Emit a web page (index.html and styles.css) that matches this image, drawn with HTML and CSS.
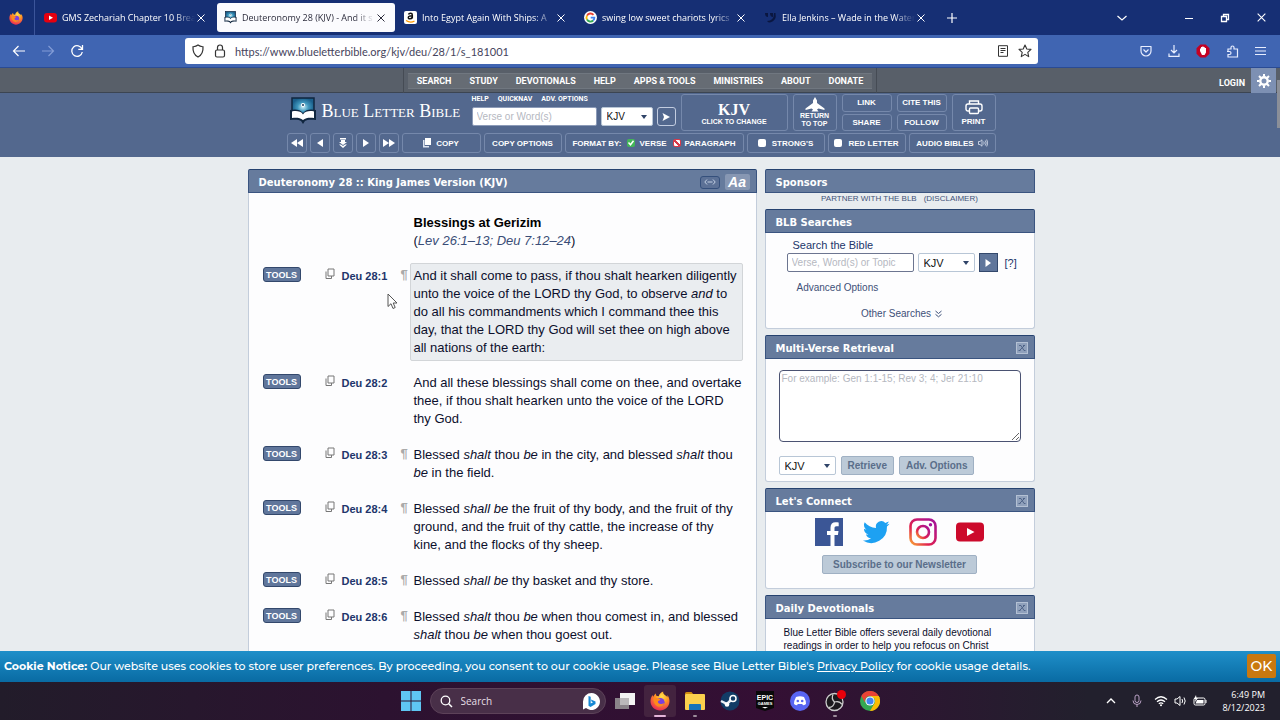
FILE: index.html
```html
<!DOCTYPE html>
<html lang="en">
<head>
    <meta charset="UTF-8">
    <title>Deuteronomy 28 (KJV)</title>
    <link rel="stylesheet" href="styles.css">
</head>
<body>
    <svg class="defs" width="0" height="0">
        <defs>
            <radialGradient id="fox" cx=".6" cy=".25" r=".8"><stop offset="0" stop-color="#ffe14a"/><stop offset=".45" stop-color="#ff9322"/><stop offset="1" stop-color="#e8215c"/></radialGradient>
            <linearGradient id="insta" x1="0" y1="1" x2="1" y2="0"><stop offset="0" stop-color="#f9a634"/><stop offset=".35" stop-color="#e0204f"/><stop offset="1" stop-color="#a3129c"/></linearGradient>
            <radialGradient id="sky"><stop offset="0" stop-color="#c9eff8"/><stop offset=".5" stop-color="#3f97bd"/><stop offset="1" stop-color="#1b5f8b"/></radialGradient>
            <symbol id="firefox" viewBox="0 0 20 20">
                <path fill="url(#fox)" d="M13.2.5c-.3 1.7.5 2.500 1.600 3.500 1 .5 2.200 1.300 2.500 2.200.3-.6.2-1.500 0-2.300C19 6 19.600 8.300 19.500 10.500 19.200 15.800 15 19.500 10 19.500S.6 15.600.5 10.500c0-2.600.8-4.700 2.300-6.400 0 .7.1 1.300.5 1.700C4 4.200 4.900 3.200 5.900 2.500c-.1 1.200.2 2.200 1.100 2.500l1.800.2C9 3.300 11 1.300 13.200.5z"/>
                <circle cx="10.300" cy="11.200" r="4.300" fill="#7a3fe0"/>
                <path fill="#ff8a1c" d="M3.500 7.500c1.500-.9 3.300-.8 4.600.1l2.300.6c0 1-1.700 1.300-2.400 2.100-.4 1.600 1.200 3 3 2.800 1.400-.2 2.300-1 3.200-.6-.8 2.300-3 3.500-5.200 3.200-3.400-.5-5.700-4-5.500-8.200z"/>
            </symbol>
            <symbol id="blb" viewBox="0 0 28 28">
                <rect x="3" y="1" width="22" height="18" fill="url(#sky)" stroke="#10263f" stroke-width="1.500"/>
                <circle cx="14" cy="8" r="2" fill="#fff"/><circle cx="14" cy="8" r="1" fill="#143a5c"/>
                <path d="M1 23V13c5-1 10-1 13 3 3-4 8-4 13-3v10c-5-.6-9-.5-11 1l-2 3-2-3c-2-1.500-6-1.600-11-1z" fill="#10263f"/>
                <path d="M3 21v-6.500c4-1 9-.5 11 3 2-3.500 7-4 11-3V21c-4-.6-8-.5-11 2-3-2.500-7-2.600-11-2z" fill="#fff"/>
            </symbol>
            <symbol id="x" viewBox="0 0 10 10"><path d="M1.500 1.500l7 7M8.500 1.500l-7 7" fill="none" stroke="currentColor"/></symbol>
            <symbol id="shut" viewBox="0 0 8 8"><path d="M1 1.500h2l3 5h1.500M6.500 1.500L1.500 6.500M5 1.500h2M.5 6.500h2" fill="none" stroke="currentColor"/></symbol>
            <symbol id="copy" viewBox="0 0 10 12"><path d="M3 1h6v7H3z" fill="none" stroke="currentColor"/><path d="M1 3.500v7h5.500V8" fill="none" stroke="currentColor"/></symbol>
        </defs>
    </svg>

    <div class="tabs">
        <div class="home"><svg width="14" height="14"><use href="#firefox"/></svg></div>
        <div class="tab">
            <svg width="13" height="13" viewBox="0 0 13 13"><rect y="2" width="13" height="9.500" rx="3" fill="#e5000f"/><path d="M5 4.500v4.500l4-2.250z" fill="#fff"/></svg>
            <span>GMS Zechariah Chapter 10 Brea</span>
            <button aria-label="Close"><svg width="10" height="10"><use href="#x"/></svg></button>
        </div>
        <div class="tab on">
            <svg width="13" height="13"><use href="#blb"/></svg>
            <span>Deuteronomy 28 (KJV) - And it s</span>
            <button aria-label="Close"><svg width="10" height="10"><use href="#x"/></svg></button>
        </div>
        <div class="tab">
            <svg width="13" height="13" viewBox="0 0 13 13"><rect width="13" height="13" rx="2" fill="#fff"/><path d="M4.500 3.500C5 2 8.300 1.800 8.300 3.900v3.600M8.200 4.800c-2-.1-3.900.3-3.900 1.800 0 1.700 3 1.700 3.900-.2" fill="none" stroke="#111" stroke-width="1.500"/><path d="M2 9.500q4.500 3 8.500.4" fill="none" stroke="#f90" stroke-width="1.200"/></svg>
            <span>Into Egypt Again With Ships: A</span>
            <button aria-label="Close"><svg width="10" height="10"><use href="#x"/></svg></button>
        </div>
        <div class="tab">
            <svg width="13" height="13" viewBox="0 0 13 13"><circle cx="6.500" cy="6.500" r="6.500" fill="#fff"/><g fill="none" stroke-width="1.800"><path d="M9.500 3.800A4 4 0 0 0 3 4.600" stroke="#ea4335"/><path d="M3 4.600a4 4 0 0 0 0 3.900" stroke="#fbbc05"/><path d="M3 8.500a4 4 0 0 0 6.200 1" stroke="#34a853"/><path d="M9.200 9.500a4 4 0 0 0 1.200-2.900H6.700" stroke="#4285f4"/></g></svg>
            <span>swing low sweet chariots lyrics</span>
            <button aria-label="Close"><svg width="10" height="10"><use href="#x"/></svg></button>
        </div>
        <div class="tab">
            <svg width="13" height="13" viewBox="0 0 13 13"><path d="M1 2h3v4q-3 0-3-4zM6 2h3v4q-3 0-3-4z" fill="#0a1640"/><path d="M11.500 2q1.500 8-5.500 9.500-2 0-3-1.500 7 0 7-8z" fill="#0a1640"/></svg>
            <span>Ella Jenkins – Wade in the Water</span>
            <button aria-label="Close"><svg width="10" height="10"><use href="#x"/></svg></button>
        </div>
        <button class="plus" aria-label="New tab"><svg width="12" height="12" viewBox="0 0 12 12"><path d="M6 1v10M1 6h10" stroke="#fff" stroke-width="1.200"/></svg></button>
        <div class="window">
            <button aria-label="List all tabs"><svg width="12" height="12" viewBox="0 0 12 12"><path d="M1.500 4l4.500 4 4.500-4" fill="none" stroke="#fff" stroke-width="1.200"/></svg></button>
            <button aria-label="Minimize"><svg width="10" height="10" viewBox="0 0 10 10"><path d="M1 5.500h8" stroke="#fff"/></svg></button>
            <button aria-label="Restore"><svg width="10" height="10" viewBox="0 0 10 10"><path d="M1.500 3.500h5v5h-5zM3.500 3V1.500h5v5H7" fill="none" stroke="#fff" stroke-width="1.300"/></svg></button>
            <button aria-label="Close window"><svg width="11" height="11"><use href="#x"/></svg></button>
        </div>
    </div>

    <div class="toolbar">
        <div class="tools-left">
            <button aria-label="Back"><svg width="14" height="14" viewBox="0 0 14 14"><path d="M13 7H1.500M6.500 2l-5 5 5 5" fill="none" stroke="#fff" stroke-width="1.200"/></svg></button>
            <button aria-label="Forward"><svg width="14" height="14" viewBox="0 0 14 14"><path d="M1 7h11.500M7.500 2l5 5-5 5" fill="none" stroke="#829cd6" stroke-width="1.200"/></svg></button>
            <button aria-label="Reload"><svg width="14" height="14" viewBox="0 0 14 14"><path d="M12 5A5.300 5.300 0 1 0 12.300 8M12.500 1v4.300H8.300" fill="none" stroke="#fff" stroke-width="1.300"/></svg></button>
        </div>
        <div class="url">
            <svg width="14" height="14" viewBox="0 0 14 14"><path d="M7 1c2 1.500 3.500 1.600 5 1.800C12.300 7 11 11 7 13 3 11 1.700 7 2 2.800 3.500 2.600 5 2.500 7 1z" fill="none" stroke="#333" stroke-width="1.200"/></svg>
            <svg width="12" height="14" viewBox="0 0 12 14"><rect x="1.500" y="6" width="9" height="7" rx="1.500" fill="none" stroke="#333" stroke-width="1.200"/><path d="M3.500 6V3.500a2.500 2.500 0 0 1 5 0V6" fill="none" stroke="#333" stroke-width="1.200"/></svg>
            <input type="text" aria-label="Address" value="https://www.blueletterbible.org/kjv/deu/28/1/s_181001">
            <svg width="12" height="12" viewBox="0 0 12 12"><path d="M1.500.7h9v10.600h-9zM3.500 3.500h5M3.500 5.500h5M3.500 7.500h3" fill="none" stroke="#333"/></svg>
            <svg width="14" height="14" viewBox="0 0 14 14"><path d="M7 1l1.800 4 4.200.4-3.200 2.900.9 4.300L7 10.400l-3.700 2.200.9-4.300L1 5.400 5.200 5z" fill="none" stroke="#333" stroke-width="1.100" stroke-linejoin="round"/></svg>
        </div>
        <div class="tools-right">
            <button aria-label="Pocket"><svg width="12" height="12" viewBox="0 0 12 12"><path d="M1 1.500h10V6A5 5 0 0 1 1 6zM3.500 4.500L6 7l2.500-2.500" fill="none" stroke="#e8eeff" stroke-width="1.200" stroke-linejoin="round"/></svg></button>
            <button aria-label="Downloads"><svg width="12" height="12" viewBox="0 0 12 12"><path d="M6 0v8M3 5l3 3 3-3M1 8.500v2.800h10V8.500" fill="none" stroke="#e8eeff" stroke-width="1.200"/></svg></button>
            <button aria-label="Ad blocker"><svg width="14" height="14" viewBox="0 0 14 14"><path d="M4.300.5h5.400l3.800 3.800v5.400l-3.800 3.800H4.300L.5 9.700V4.300z" fill="#c40023"/><path d="M4 7V4.500h1V3h1.200v-.6h1.300V3h1.200v1H10v4.500L8.500 11H6z" fill="#fff"/></svg></button>
            <button aria-label="Extensions"><svg width="13" height="13" viewBox="0 0 13 13"><path d="M2 6V4h3V2.500a1.500 1.500 0 0 1 3 0V4h3.500v8H2V9.500h1.500a1.500 1.500 0 0 0 0-3H1" fill="none" stroke="#e8eeff" stroke-width="1.200"/></svg></button>
            <button aria-label="Menu"><svg width="11" height="10" viewBox="0 0 11 10"><path d="M0 1.500h11M0 5h11M0 8.500h11" stroke="#e8eeff"/></svg></button>
        </div>
    </div>

    <div class="site">
        <div class="topnav">
            <nav>
                <a href="#">SEARCH</a><a href="#">STUDY</a><a href="#">DEVOTIONALS</a><a href="#">HELP</a><a href="#">APPS &amp; TOOLS</a><a href="#">MINISTRIES</a><a href="#">ABOUT</a><a href="#">DONATE</a>
            </nav>
            <div class="account">
                <a href="#">LOGIN</a>
                <button aria-label="Settings"><svg width="14" height="14" viewBox="0 0 14 14"><circle cx="7" cy="7" r="3.700" fill="none" stroke="#fff" stroke-width="2.400"/><path d="M7 0v2.500M7 11.500V14M0 7h2.500M11.500 7H14M2 2l2 2M10 10l2 2M12 2l-2 2M4 10l-2 2" stroke="#fff" stroke-width="2"/></svg></button>
            </div>
        </div>

        <header>
            <div class="head-top">
                <a class="logo" href="#"><svg width="28" height="28"><use href="#blb"/></svg><span>Blue Letter Bible</span></a>
                <form class="search">
                    <div class="quick"><a href="#">HELP</a><a href="#">QUICKNAV</a><a href="#">ADV. OPTIONS</a></div>
                    <div class="line">
                        <input type="text" aria-label="Verse or words" placeholder="Verse or Word(s)">
                        <select aria-label="Version"><option>KJV</option></select>
                        <button type="button" aria-label="Go"><svg width="10" height="10" viewBox="0 0 10 10"><path d="M1.500 1l7.500 4-7.500 4 1.500-4z" fill="#fff"/></svg></button>
                    </div>
                </form>
                <button class="box version"><b>KJV</b>CLICK TO CHANGE</button>
                <button class="box return"><svg width="20" height="15" viewBox="0 0 20 15"><path d="M10 0l2 3.500v2.500l7.500 5.500v1.500l-6-1.500-1.500 1 1.500 2h-7l1.500-2-1.500-1-6 1.500v-1.500L8 6V3.500z" fill="#fff"/></svg>RETURN<br>TO TOP</button>
                <div class="pair"><button class="box">LINK</button><button class="box">SHARE</button></div>
                <div class="pair"><button class="box">CITE THIS</button><button class="box">FOLLOW</button></div>
                <button class="box print"><svg width="18" height="15" viewBox="0 0 18 15"><path d="M4.500 4V1h9v3M4.500 11H3a2 2 0 0 1-2-2V6a2 2 0 0 1 2-2h12a2 2 0 0 1 2 2v3a2 2 0 0 1-2 2h-1.500" fill="none" stroke="#fff" stroke-width="1.400"/><rect x="4.500" y="8" width="9" height="5.500" rx="1" fill="none" stroke="#fff" stroke-width="1.400"/></svg>PRINT</button>
            </div>
            <div class="head-bottom">
                <button class="box step" aria-label="Previous book"><svg width="12" height="10" viewBox="0 0 12 10"><path d="M6 1v8L0 5zM12 1v8L6 5z" fill="#fff"/></svg></button>
                <button class="box step" aria-label="Previous chapter"><svg width="8" height="10" viewBox="0 0 8 10"><path d="M7 1v8L1 5z" fill="#fff"/></svg></button>
                <button class="box step" aria-label="Go to verse"><svg width="10" height="10" viewBox="0 0 10 10"><path d="M2 0h6v1.500H2zM3 2h4v2h2L5 7 1 4h2zM1 6.500h2l2 1.500 2-1.500h2L5 10z" fill="#fff"/></svg></button>
                <button class="box step" aria-label="Next chapter"><svg width="8" height="10" viewBox="0 0 8 10"><path d="M1 1v8l6-4z" fill="#fff"/></svg></button>
                <button class="box step" aria-label="Next book"><svg width="12" height="10" viewBox="0 0 12 10"><path d="M0 1v8l6-4zM6 1v8l6-4z" fill="#fff"/></svg></button>
                <button class="box copy"><svg width="8" height="10" viewBox="0 0 8 10"><path d="M2 0h6v7H2z" fill="#fff"/><path d="M0 2h1.500v6H6v1.500H0z" fill="#dde4f0"/></svg>COPY</button>
                <button class="box options">COPY OPTIONS</button>
                <div class="box format">FORMAT BY:
                    <label><input class="yes" type="radio" name="format" checked>VERSE</label>
                    <label><input class="no" type="radio" name="format">PARAGRAPH</label>
                </div>
                <label class="box toggle"><input type="checkbox">STRONG'S</label>
                <label class="box toggle"><input type="checkbox">RED LETTER</label>
                <button class="box audio">AUDIO BIBLES <svg width="10" height="8" viewBox="0 0 10 8"><path d="M.5 2.500h1.500L4 .8v6.400L2 5.500H.5zM5.700 2.500q1 1.500 0 3M7.300 1.500q1.800 2.500 0 5M8.700.5q2.200 3.500 0 7" fill="none" stroke="#dfe6f2" stroke-width=".8"/></svg></button>
            </div>
        </header>

        <div class="columns">
            <main class="panel">
                <div class="title">
                    <h1>Deuteronomy 28 :: King James Version (KJV)</h1>
                    <button class="wide" aria-label="Widen column"><svg width="12" height="6" viewBox="0 0 12 6"><path d="M3 .5L.8 3 3 5.500M9 .5L11.200 3 9 5.500M3.500 3h5" fill="none" stroke="#c4d1e4"/></svg></button>
                    <button class="aa">Aa</button>
                </div>
                <div class="chapter">
                    <h2>Blessings at Gerizim</h2>
                    <p class="refs">(<a href="#">Lev 26:1–13; Deu 7:12–24</a>)</p>
                    <div class="verse">
                        <button>TOOLS</button><svg class="cp" width="10" height="12"><use href="#copy"/></svg><a href="#">Deu 28:1</a><i class="mark">¶</i>
                        <p class="current">And it shall come to pass, if thou shalt hearken diligently unto the voice of the LORD thy God, to observe <em>and</em> to do all his commandments which I command thee this day, that the LORD thy God will set thee on high above all nations of the earth:</p>
                    </div>
                    <div class="verse">
                        <button>TOOLS</button><svg class="cp" width="10" height="12"><use href="#copy"/></svg><a href="#">Deu 28:2</a><i class="mark"></i>
                        <p>And all these blessings shall come on thee, and overtake thee, if thou shalt hearken unto the voice of the LORD thy God.</p>
                    </div>
                    <div class="verse">
                        <button>TOOLS</button><svg class="cp" width="10" height="12"><use href="#copy"/></svg><a href="#">Deu 28:3</a><i class="mark">¶</i>
                        <p>Blessed <em>shalt</em> thou <em>be</em> in the city, and blessed <em>shalt</em> thou <em>be</em> in the field.</p>
                    </div>
                    <div class="verse">
                        <button>TOOLS</button><svg class="cp" width="10" height="12"><use href="#copy"/></svg><a href="#">Deu 28:4</a><i class="mark">¶</i>
                        <p>Blessed <em>shall be</em> the fruit of thy body, and the fruit of thy ground, and the fruit of thy cattle, the increase of thy kine, and the flocks of thy sheep.</p>
                    </div>
                    <div class="verse">
                        <button>TOOLS</button><svg class="cp" width="10" height="12"><use href="#copy"/></svg><a href="#">Deu 28:5</a><i class="mark">¶</i>
                        <p>Blessed <em>shall be</em> thy basket and thy store.</p>
                    </div>
                    <div class="verse">
                        <button>TOOLS</button><svg class="cp" width="10" height="12"><use href="#copy"/></svg><a href="#">Deu 28:6</a><i class="mark">¶</i>
                        <p>Blessed <em>shalt</em> thou <em>be</em> when thou comest in, and blessed <em>shalt</em> thou <em>be</em> when thou goest out.</p>
                    </div>
                </div>
            </main>

            <aside>
                <section>
                    <div class="title"><h3>Sponsors</h3></div>
                    <p class="partner"><a href="#">PARTNER WITH THE BLB</a><a href="#">(DISCLAIMER)</a></p>
                </section>
                <section class="panel">
                    <div class="title"><h3>BLB Searches</h3></div>
                    <form class="bible-search">
                        <label for="topic">Search the Bible</label>
                        <div class="line">
                            <input id="topic" type="text" placeholder="Verse, Word(s) or Topic">
                            <select aria-label="Version"><option>KJV</option></select>
                            <button type="button" aria-label="Search"><svg width="6" height="8" viewBox="0 0 6 8"><path d="M.5 0L6 4 .5 8z" fill="#fff"/></svg></button>
                            <a href="#">[?]</a>
                        </div>
                        <a class="adv" href="#">Advanced Options</a>
                        <a class="other" href="#">Other Searches <svg width="7" height="8" viewBox="0 0 7 8"><path d="M.5 1l3 2.500 3-2.500M.5 4.300l3 2.500 3-2.500" fill="none" stroke="#3d5078"/></svg></a>
                    </form>
                </section>
                <section class="panel">
                    <div class="title"><h3>Multi-Verse Retrieval</h3><button class="shut" aria-label="Close"><svg width="8" height="8"><use href="#shut"/></svg></button></div>
                    <form class="multi">
                        <textarea aria-label="Verses" placeholder="For example: Gen 1:1-15; Rev 3; 4; Jer 21:10"></textarea>
                        <div class="line">
                            <select aria-label="Version"><option>KJV</option></select>
                            <button class="pale" type="button">Retrieve</button>
                            <button class="pale" type="button">Adv. Options</button>
                        </div>
                    </form>
                </section>
                <section class="panel">
                    <div class="title"><h3>Let's Connect</h3><button class="shut" aria-label="Close"><svg width="8" height="8"><use href="#shut"/></svg></button></div>
                    <div class="connect">
                        <div class="social">
                            <a href="#" aria-label="Facebook"><svg width="28" height="28" viewBox="0 0 28 28"><path d="M0 0h28v28H0z" fill="#3b5696"/><path d="M15.500 28V17H12v-4h3.500V9.500C15.500 6 17.500 4.300 20.500 4.300c1.500 0 2.700.1 3.200.2v3.700h-2.200c-1.600 0-2 .8-2 2V13h4l-.6 4h-3.400v11z" fill="#fff"/></svg></a>
                            <a href="#" aria-label="Twitter"><svg width="28" height="28" viewBox="0 0 24 24"><path fill="#1da1f2" d="M23.600 4.900c-.8.4-1.700.6-2.700.8 1-.6 1.700-1.500 2-2.600-.9.500-1.900.9-2.900 1.100a4.700 4.700 0 0 0-8 4.300C8.100 8.300 4.600 6.400 2.300 3.600a4.700 4.700 0 0 0 1.500 6.300c-.8 0-1.500-.2-2.100-.6v.1c0 2.300 1.600 4.200 3.800 4.600-.7.200-1.400.2-2.100.1.600 1.900 2.300 3.200 4.400 3.300A9.500 9.500 0 0 1 .8 19.300 13.400 13.400 0 0 0 21.400 7.300c.8-.6 1.600-1.400 2.200-2.400z"/></svg></a>
                            <a href="#" aria-label="Instagram"><svg width="28" height="28" viewBox="0 0 28 28"><g fill="none" stroke="url(#insta)" stroke-width="2.600"><rect x="1.500" y="1.500" width="25" height="25" rx="6.500"/><circle cx="14" cy="14" r="6"/></g><circle cx="21.500" cy="6.700" r="1.700" fill="#a3129c"/></svg></a>
                            <a href="#" aria-label="YouTube"><svg width="28" height="28" viewBox="0 0 28 28"><rect y="4.500" width="28" height="19" rx="4" fill="#cc0a2b"/><path d="M11 10v8l7.500-4z" fill="#fff"/></svg></a>
                        </div>
                        <button class="pale">Subscribe to our Newsletter</button>
                    </div>
                </section>
                <section class="panel">
                    <div class="title"><h3>Daily Devotionals</h3><button class="shut" aria-label="Close"><svg width="8" height="8"><use href="#shut"/></svg></button></div>
                    <p class="devo">Blue Letter Bible offers several daily devotional readings in order to help you refocus on Christ</p>
                </section>
            </aside>
        </div>
        <div class="thumb"></div>
    </div>

    <div class="cookie">
        <p><b>Cookie Notice:</b> Our website uses cookies to store user preferences. By proceeding, you consent to our cookie usage. Please see Blue Letter Bible's <a href="#">Privacy Policy</a> for cookie usage details.</p>
        <button>OK</button>
    </div>

    <div class="taskbar">
        <div class="apps">
            <button aria-label="Start"><svg width="20" height="20" viewBox="0 0 20 20"><path d="M0 0h9.500v9.500H0zM10.500 0H20v9.500h-9.500zM0 10.500h9.500V20H0zM10.500 10.500H20V20h-9.500z" fill="#5fc6f4"/></svg></button>
            <label class="find">
                <svg width="13" height="13" viewBox="0 0 13 13"><circle cx="5.500" cy="5.500" r="4.300" fill="none" stroke="#fff" stroke-width="1.300"/><path d="M8.700 8.700L12 12" stroke="#fff" stroke-width="1.500"/></svg>
                <input type="text" placeholder="Search" aria-label="Search">
                <svg width="17" height="17" viewBox="0 0 17 17"><path d="M8.500 0A8.500 8.500 0 1 1 3 15L0 16.500V8.500A8.500 8.500 0 0 1 8.500 0z" fill="#fff"/><path d="M5.500 3l2.200.8v6.700L10 9.300 8.500 8.500 8 6.500l4.500 2v2.500l-5 3-2-1.200z" fill="#1688d4"/></svg>
            </label>
            <button aria-label="Task view"><svg width="20" height="18" viewBox="0 0 20 18"><path d="M5 1h15v12H5z" fill="#f3f3f3"/><path d="M0 6h14v11H0z" fill="#8a8389"/><path d="M5 6h9v7H5z" fill="#bbb8ba"/></svg></button>
            <button class="active" aria-label="Firefox"><svg width="20" height="20"><use href="#firefox"/></svg></button>
            <button class="open" aria-label="Files"><svg width="20" height="18" viewBox="0 0 20 18"><path d="M0 1.500Q0 0 1.500 0h5l2 2.500H0z" fill="#d18d0f"/><rect y="2" width="20" height="16" rx="1" fill="#fbd04d"/><path d="M4 18v-5q0-1 1-1h10q1 0 1 1v5z" fill="#1773b9"/></svg></button>
            <button aria-label="Steam"><svg width="20" height="20" viewBox="0 0 20 20"><circle cx="10" cy="10" r="9.500" fill="#123c66"/><path d="M1 10l6 3 3-3 2-4" stroke="#e9eef5" stroke-width="2.500" fill="none"/><circle cx="13" cy="7.500" r="3" fill="#123c66" stroke="#fff" stroke-width="1.500"/><circle cx="7" cy="13.500" r="2.300" fill="#fff"/></svg></button>
            <button aria-label="Epic Games"><svg width="18" height="20" viewBox="0 0 18 20"><path d="M0 0h18v17l-9 3-9-3z" fill="#090909"/><text x="9" y="9" text-anchor="middle" class="epic">EPIC</text><text x="9" y="14" text-anchor="middle" class="games">GAMES</text><path d="M6 16h6l-3 1.500z" fill="#fff"/></svg></button>
            <button aria-label="Discord"><svg width="20" height="20" viewBox="0 0 20 20"><circle cx="10" cy="10" r="10" fill="#5865f2"/><path d="M6 6q4-1.500 8 0 2 3.500 2 7-1.500 1.200-3 1.300l-.8-1.300H7.800L7 14.300Q5.500 14.200 4 13q0-3.500 2-7z" fill="#fff"/><circle cx="7.800" cy="10" r="1.300" fill="#5865f2"/><circle cx="12.200" cy="10" r="1.300" fill="#5865f2"/></svg></button>
            <button class="open" aria-label="OBS"><svg width="22" height="22" viewBox="0 0 22 22"><circle cx="10.500" cy="12" r="8.500" fill="#1b191d" stroke="#ccc" stroke-width="1.300"/><g fill="none" stroke="#ccc" stroke-width="1.300"><path d="M9 4.500q-2 4 1.500 7.500M18 14.500q-2.500-4-7.500-2.500M5 17.500q5-.5 5.500-5.500"/></g><circle cx="17.500" cy="4.500" r="4.500" fill="#e8000b"/></svg></button>
            <button aria-label="Chrome"><svg width="20" height="20" viewBox="0 0 20 20"><circle cx="10" cy="10" r="10" fill="#34a853"/><path d="M1.300 5A10 10 0 0 1 18.700 5H10a5 5 0 0 0-4.400 7.500z" fill="#ea4335"/><path d="M18.700 5A10 10 0 0 1 10 20l4.400-7.500A5 5 0 0 0 14 7z" fill="#fbbc04"/><path d="M10 5h8.700q.6 1 .9 2H13z" fill="#fbbc04"/><circle cx="10" cy="10" r="4.600" fill="#fff"/><circle cx="10" cy="10" r="3.600" fill="#4285f4"/></svg></button>
        </div>
        <div class="tray">
            <svg width="10" height="8" viewBox="0 0 10 8"><path d="M1 6l4-4 4 4" fill="none" stroke="#fff" stroke-width="1.300"/></svg>
            <svg class="mic" width="10" height="14" viewBox="0 0 10 14"><rect x="3" y="1" width="4" height="7.500" rx="2" fill="none" stroke="#b9a0c4"/><path d="M1 6.500a4 4 0 0 0 8 0M5 10.500V13" fill="none" stroke="#b9a0c4"/></svg>
            <svg width="14" height="12" viewBox="0 0 14 12"><g fill="none" stroke="#fff" stroke-width="1.200"><path d="M1 4.500q6-5.500 12 0M3 6.800q4-3.600 8 0M4.800 8.800q2.200-1.900 4.400 0"/></g><circle cx="7" cy="10.300" r="1" fill="#fff"/></svg>
            <svg width="13" height="12" viewBox="0 0 13 12"><path d="M1 4h2l3-2.500v9L3 8H1zM8 4q1.200 2 0 4M10 2.500q2.400 3.500 0 7" fill="none" stroke="#fff"/></svg>
            <svg width="14" height="12" viewBox="0 0 14 12"><rect x="1" y="3" width="11" height="7" rx="1.500" fill="none" stroke="#fff"/><path d="M4 5h6.500v3.500h-8zM12.500 5h1v3h-1z" fill="#fff"/><path d="M3 0L1 4h1.500L2 7l3-4H3.500z" fill="#fff"/></svg>
            <div class="clock">6:49 PM<br>8/12/2023</div>
        </div>
    </div>

    <svg class="cursor" width="12" height="17" viewBox="0 0 12 17"><path d="M1 1v12.500l3-2.800 2 4.800 2.200-1-2-4.500H10z" fill="#fff" stroke="#555"/></svg>
</body>
</html>
```
FILE: styles.css
```css
* {
    box-sizing: border-box;
}
body {
    margin: 0;
    height: 100vh;
    display: flex;
    flex-direction: column;
    overflow: hidden;
    font-family: "Liberation Sans", Arial, sans-serif;
    font-size: 11px;
    color: #0c0f2c;
}
button, input, select, textarea {
    font-family: inherit;
    font-size: inherit;
    margin: 0;
    padding: 0;
}
button {
    border: 0;
    background: none;
    color: inherit;
    display: flex;
    align-items: center;
    justify-content: center;
}
a {
    color: inherit;
    text-decoration: none;
}
h1, h2, h3, p {
    margin: 0;
}
svg {
    flex: none;
    display: block;
}
.defs {
    position: absolute;
}

/* browser */
.tabs {
    height: 35px;
    flex: none;
    display: flex;
    align-items: center;
    gap: 2px;
    background: #162f74;
    color: #fff;
    font-family: "Open Sans", "Noto Sans", sans-serif;
    font-size: 9px;
    font-weight: 500;
}
.home {
    width: 35px;
    height: 35px;
    padding-left: 9px;
    display: flex;
    align-items: center;
    border-right: 1px solid #3c559a;
}
.tab {
    flex: 0 1 178px;
    height: 29px;
    display: flex;
    align-items: center;
    padding: 0 9px 0 7px;
    border-radius: 3px;
    min-width: 0;
}
.tab span {
    flex: 1;
    margin: 0 1px 0 5px;
    overflow: hidden;
    white-space: nowrap;
    -webkit-mask-image: linear-gradient(to right, #000 84%, transparent);
    mask-image: linear-gradient(to right, #000 84%, transparent);
}
.tab.on {
    background: #fbfbfe;
    color: #2c2c3c;
}
.plus {
    margin-left: 9px;
}
.window {
    margin-left: auto;
    padding-right: 13px;
    display: flex;
    align-items: center;
    gap: 26px;
}
.window button:first-child {
    margin-right: 30px;
}
.toolbar {
    height: 33px;
    flex: none;
    display: flex;
    align-items: center;
    background: #4065b2;
    border-bottom: 1px solid #2a4b94;
}
.tools-left {
    display: flex;
    gap: 15px;
    padding-left: 12px;
}
.tools-right {
    display: flex;
    align-items: center;
    gap: 16px;
    padding-right: 14px;
}
.url {
    flex: 1;
    height: 26px;
    margin: 0 102px 0 101px;
    padding: 0 6px;
    display: flex;
    align-items: center;
    gap: 9px;
    background: #fff;
    border-radius: 3px;
}
.url input {
    flex: 1;
    border: 0;
    outline: 0;
    background: none;
    font-family: Lato, "Noto Sans", sans-serif;
    font-size: 11px;
    color: #45435c;
}

/* site header */
.site {
    flex: 1;
    min-height: 0;
    overflow: hidden;
    position: relative;
    background: #e8ecef;
}
.topnav {
    height: 25px;
    display: grid;
    grid-template-columns: 1fr auto 1fr;
    background: #585f69;
    border-bottom: 1px solid #3c4552;
    color: #fff;
    font-family: Roboto, sans-serif;
    font-size: 9px;
    font-weight: bold;
}
.topnav nav {
    grid-column: 2;
    display: flex;
    align-items: center;
    padding: 0 4px;
    border: 1px solid #454b54;
    border-width: 0 1px;
}
.topnav nav a {
    padding: 2px 9px;
    background: #666c74;
    border: 1px solid #707780;
    border-width: 1px 0;
}
.account {
    display: flex;
    justify-content: flex-end;
    align-items: center;
    gap: 6px;
    padding-right: 4px;
}
.account a {
    padding-top: 5px;
}
.account button {
    width: 25px;
    height: 25px;
    background: #7d90b3;
}
header {
    padding: 1px 0 4px 2px;
    background: #53688e;
    color: #fff;
    font-size: 8px;
    font-weight: bold;
}
.head-top, .head-bottom {
    max-width: 709px;
    margin: 0 auto;
    display: flex;
}
.head-top {
    height: 37px;
    gap: 5px;
}
.head-bottom {
    height: 20px;
    margin-top: 2px;
    gap: 3px;
}
.box {
    border: 1px solid #7588ab;
    border-radius: 3px;
    font-weight: bold;
    white-space: nowrap;
    display: flex;
    align-items: center;
    justify-content: center;
}
.logo {
    flex: 1;
    display: flex;
    align-items: center;
    gap: 5px;
    padding: 0 0 3px 2px;
    font-family: "Liberation Serif", serif;
    font-size: 18px;
    font-variant: small-caps;
    font-weight: normal;
    white-space: nowrap;
}
.quick {
    display: flex;
    gap: 9px;
    height: 13px;
    font-family: Roboto, sans-serif;
    font-size: 7px;
    line-height: 11px;
}
.line {
    display: flex;
    align-items: center;
}
.search .line {
    gap: 4px;
}
.search input {
    width: 125px;
    height: 19px;
    padding: 0 4px;
    border: 1px solid #8c9bb8;
    border-radius: 2px;
    font-size: 10px;
}
::placeholder {
    color: #b5b8bf;
}
select {
    appearance: none;
    width: 57px;
    height: 19px;
    border: 1px solid #b8c6d6;
    border-radius: 2px;
    padding: 0 5px;
    color: #111;
    background: #fff url("data:image/svg+xml,%3Csvg xmlns='http://www.w3.org/2000/svg' width='6' height='4'%3E%3Cpath d='M0 0h6L3 4z' fill='%232f4468'/%3E%3C/svg%3E") no-repeat right 5px center;
}
.search select {
    width: 52px;
    font-size: 10px;
}
.search button {
    width: 19px;
    height: 19px;
    border: 1px solid #c2cce0;
    border-radius: 3px;
}
.version {
    width: 107px;
    flex-direction: column;
    font-size: 7px;
}
.version b {
    font-family: "Liberation Serif", serif;
    font-size: 16px;
    line-height: 17px;
}
.return, .print {
    width: 44px;
    flex-direction: column;
    font-size: 7px;
    line-height: 8px;
}
.print {
    font-size: 8px;
    gap: 3px;
}
.pair {
    width: 50px;
    display: flex;
    flex-direction: column;
    gap: 2px;
}
.pair .box {
    flex: 1;
}
.step {
    width: 20px;
}
.copy {
    width: 79px;
    gap: 5px;
}
.options {
    width: 78px;
}
.format {
    flex: 1;
    gap: 6px;
}
.format label, .toggle {
    display: flex;
    align-items: center;
    gap: 4px;
}
.toggle {
    width: 78px;
    gap: 6px;
}
.audio {
    width: 87px;
    gap: 4px;
}
header input[type=radio], header input[type=checkbox] {
    appearance: none;
    width: 8px;
    height: 8px;
    border-radius: 2px;
    background: #fff;
}
header input.yes[type=radio] {
    background: url("data:image/svg+xml,%3Csvg xmlns='http://www.w3.org/2000/svg' width='8' height='8'%3E%3Crect width='8' height='8' fill='%2343b558'/%3E%3Cpath d='M1.500 3.500l2 2.200 3-4' fill='none' stroke='%23fff' stroke-width='1.500'/%3E%3C/svg%3E");
}
header input.no[type=radio] {
    background: linear-gradient(45deg, #fff 38%, #d93b4b 38%, #d93b4b 62%, #fff 62%);
    border: 1px solid #d93b4b;
}

/* page columns */
.columns {
    max-width: 789px;
    margin: 12px auto 0;
    padding-left: 2px;
    display: flex;
    align-items: flex-start;
    gap: 8px;
}
main {
    flex: 1;
}
aside {
    width: 270px;
    display: flex;
    flex-direction: column;
    gap: 6px;
}
.panel {
    background: #fdfdfe;
    border: 1px solid #c3cddb;
    border-top: 0;
    border-radius: 3px;
}
.title {
    height: 24px;
    display: flex;
    align-items: center;
    gap: 5px;
    padding: 2px 6px 0 10px;
    background: #667b9d;
    border: 1px solid #3a5480;
    border-top-color: #25426f;
    border-radius: 2px 2px 0 0;
    color: #fff;
}
.panel > .title {
    margin: 0 -1px;
}
.title h1, .title h3 {
    flex: 1;
    font: bold 10px "DejaVu Sans", Verdana, sans-serif;
}
.wide {
    width: 20px;
    height: 13px;
    border: 1px solid #35507c;
    border-radius: 3px;
    background: #5c7196;
}
.aa {
    width: 25px;
    height: 16px;
    border-radius: 2px;
    background: #8797b3;
    font: italic bold 14px "Liberation Sans", sans-serif;
}
.shut {
    width: 12px;
    height: 12px;
    border: 1px solid #b3c0d3;
    background: #8fa0bb;
    color: #4f6488;
}
.chapter {
    padding: 21px 13px 0 14px;
    font-size: 13px;
    line-height: 18px;
}
.chapter h2, .refs {
    margin-left: 151px;
    font-size: 13px;
}
.chapter h2 {
    color: #000;
}
.refs {
    margin-bottom: 13px;
}
.refs a {
    font-style: italic;
    color: #3a4d77;
}
.verse {
    display: grid;
    grid-template-columns: 62px 17px 59px 9px 1fr;
    align-items: start;
}
.verse button {
    width: 38px;
    height: 15px;
    margin-top: 4px;
    border: 1px solid #33486c;
    border-radius: 3px;
    background: #60769b;
    color: #fff;
    font-size: 9px;
    font-weight: bold;
}
.cp {
    margin-top: 5px;
    color: #777;
}
.verse > a {
    padding-top: 4px;
    font-size: 11px;
    font-weight: bold;
    color: #21356b;
}
.mark {
    padding-top: 3px;
    font-style: normal;
    font-weight: bold;
    color: #aaa;
}
.verse p {
    min-height: 36px;
    padding: 4px 0 14px 4px;
}
.verse p.current {
    margin-bottom: 9px;
    padding: 3px 0 3px 3px;
    border: 1px solid #d2d5d8;
    border-radius: 2px;
    background: #eaedf0;
}

/* sidebar */
.partner {
    display: flex;
    justify-content: center;
    gap: 7px;
    height: 10px;
    font-size: 8px;
    line-height: 12px;
    color: #3f5278;
}
.bible-search {
    display: flex;
    flex-direction: column;
    align-items: flex-start;
    padding: 5px 17px 8px 21px;
    color: #3d5078;
}
.bible-search label {
    padding-left: 6px;
    line-height: 15px;
    color: #22356a;
}
.bible-search .line {
    gap: 4px;
}
.bible-search input {
    width: 127px;
    height: 19px;
    padding: 0 4px;
    border: 1px solid #6c7590;
    border-radius: 2px;
    font-size: 10px;
}
.bible-search button {
    width: 19px;
    height: 19px;
    border: 1px solid #33486c;
    background: #60769b;
}
.bible-search .line a {
    padding-left: 3px;
    color: #22356a;
}
.adv, .other {
    font-size: 10px;
    line-height: 13px;
}
.adv {
    margin: 9px 0 13px 10px;
}
.other {
    align-self: center;
    display: flex;
    align-items: center;
    gap: 4px;
}
.multi {
    padding: 11px 13px 6px;
}
textarea {
    display: block;
    width: 100%;
    height: 72px;
    margin-bottom: 14px;
    padding: 2px;
    border: 1px solid #4a5272;
    border-radius: 4px;
    font-size: 10px;
}
.multi .line {
    gap: 5px;
}
.pale {
    height: 19px;
    padding: 0 6px;
    border: 1px solid #9fb0c3;
    border-radius: 2px;
    background: #bccad8;
    color: #5a6e8a;
    font-size: 10px;
    font-weight: bold;
}
.connect {
    display: flex;
    flex-direction: column;
    align-items: center;
    gap: 9px;
    padding: 6px 0 14px;
}
.connect .pale {
    padding: 0 10px;
}
.social {
    display: flex;
    gap: 19px;
}
.devo {
    padding: 7px 18px;
    font-size: 10px;
    line-height: 13px;
}
.thumb {
    position: absolute;
    right: 0;
    top: 12px;
    width: 3px;
    height: 48px;
    background: #8b8f98;
}

/* cookie notice */
.cookie {
    height: 31px;
    flex: none;
    display: flex;
    align-items: center;
    justify-content: space-between;
    padding: 0 4px 2px;
    background: linear-gradient(#1f8fc9, #096ba3);
    color: #fff;
    font-family: Montserrat, Inter, sans-serif;
    font-size: 11px;
    font-weight: 500;
}
.cookie a {
    text-decoration: underline;
}
.cookie button {
    width: 29px;
    height: 24px;
    border-radius: 2px;
    background: #c9780f;
    font-size: 14px;
    font-weight: 500;
}

/* taskbar */
.taskbar {
    height: 38px;
    flex: none;
    display: grid;
    grid-template-columns: 1fr auto 1fr;
    align-items: center;
    background: linear-gradient(to right, #221c2a, #2c1230 30%, #340f34 60%, #22202d 85%);
    color: #fff;
    font-family: "Open Sans", "Noto Sans", sans-serif;
    font-size: 10px;
}
.apps {
    grid-column: 2;
    display: flex;
    align-items: center;
    gap: 3px;
}
.apps button {
    width: 32px;
    height: 32px;
    border-radius: 3px;
    position: relative;
}
.apps .active {
    background: #43233f;
}
.apps .active::after, .apps .open::after {
    content: "";
    position: absolute;
    bottom: 0;
    width: 12px;
    height: 2px;
    border-radius: 1px;
    background: #e3b6d8;
}
.apps .open::after {
    width: 4px;
    background: #9c8c9b;
}
.find {
    width: 176px;
    height: 26px;
    padding: 0 5px 0 9px;
    display: flex;
    align-items: center;
    gap: 8px;
    border: 1px solid #5d4259;
    border-radius: 13px;
    background: #482f48;
}
.find input {
    flex: 1;
    min-width: 0;
    border: 0;
    background: none;
    color: #fff;
}
.find input::placeholder {
    color: #e6dfe6;
}
.epic, .games {
    font: bold 7px "Liberation Sans", sans-serif;
    fill: #fff;
}
.games {
    font-size: 4px;
}
.tray {
    display: flex;
    align-items: center;
    justify-content: flex-end;
    gap: 6px;
    padding-right: 15px;
}
.mic {
    margin: 0 6px 0 10px;
}
.clock {
    margin-left: 9px;
    font-size: 9px;
    line-height: 13px;
    text-align: right;
}
.cursor {
    position: absolute;
    left: 387px;
    top: 293px;
}
```
